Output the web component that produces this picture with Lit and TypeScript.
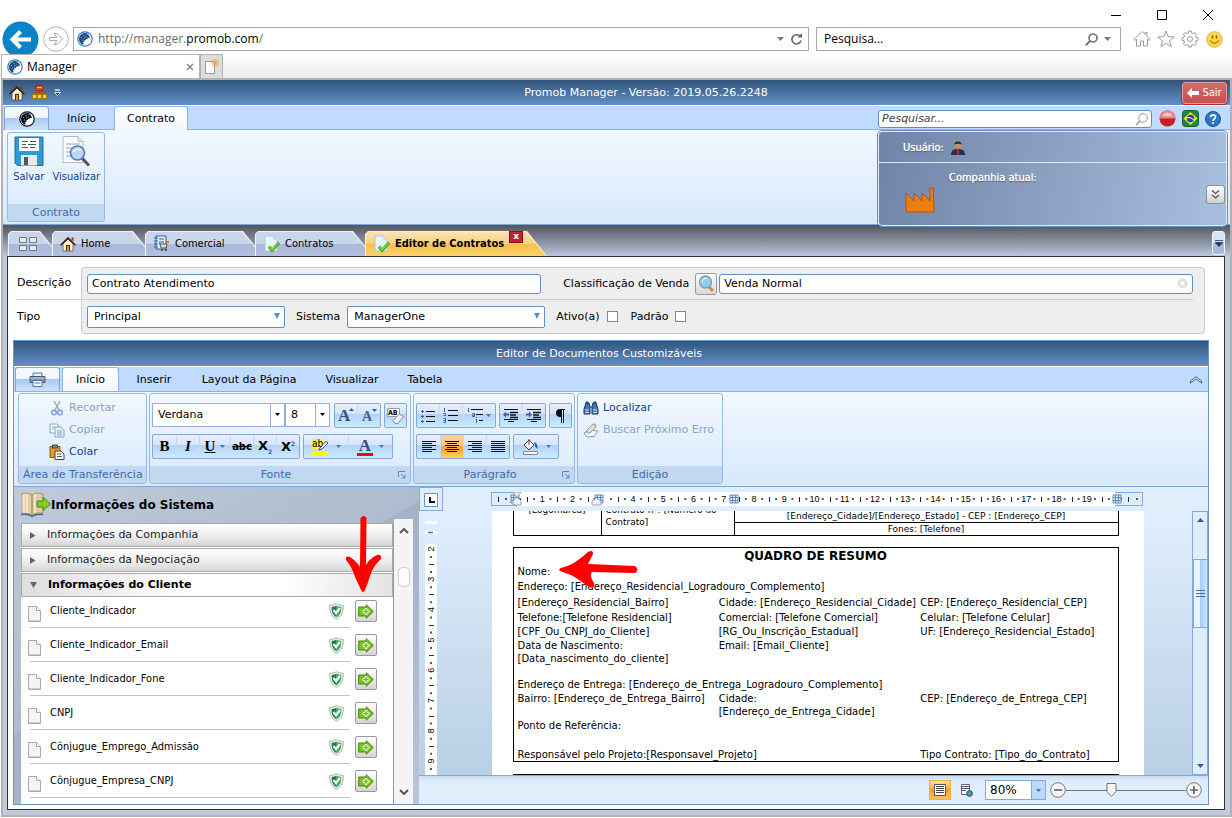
import { LitElement, html, css, svg } from "lit";
import { customElement, state } from "lit/decorators.js";
import { classMap } from "lit/directives/class-map.js";

const globe = (size: number, dark: string, ring: string) => html`<svg width=${size} height=${size} viewBox="0 0 16 16" aria-hidden="true">
  <circle cx="8" cy="8" r="7.200" fill="#fff" stroke=${ring} stroke-width="1.200"/>
  <path fill=${dark} d="M8.500 2C5 1.800 2.200 4.400 2 7.600c-.1 2.900 1.300 5.100 3.600 6.200.6.200 1-.2.900-.8L6.200 11l1.300-.6-.2-1.400 1.500.3.200-1.500 1.400.4.400-1.500 1.700.6.500-1.600-1-.4C12 3.600 10.500 2.100 8.500 2z"/>
  <path d="M4 6.500h1M6.500 4.500h1M5 9h1M8.500 6h1M9.500 3.500h1M7 7h1" stroke="#fff" stroke-width=".8" opacity=".7"/>
</svg>`;

const house = (size: number) => html`<svg width=${size} height=${size} viewBox="0 0 16 16" aria-hidden="true">
  <path d="M11.500 1.500h2v4l-2-2z" fill="#8a3a12"/>
  <path d="M3 8v7h10V8L8 3z" fill="#f8f1dc" stroke="#4a2a14" stroke-width=".6"/>
  <path d="M0 8.800L8 .8l8 8-1.200 1L8 3.400 1.200 9.800z" fill="#4a2410"/>
  <path d="M6 9h4v6H6z" fill="#5a2a10"/><path d="M7 10h2v5H7z" fill="#c9a22a"/>
</svg>`;

const docCheck = html`<svg width="17" height="17" viewBox="0 0 17 17" aria-hidden="true">
  <path d="M2 1h8l4 4v11H2z" fill="#e6f4fd" stroke="#9cc4dc" stroke-width=".8"/><path d="M10 1v4h4z" fill="#bfe0f3"/>
  <path d="M6 11.500l3 4 7-8" fill="none" stroke="#3f9e1d" stroke-width="3"/><path d="M6.200 11.700l2.800 3.200 6.500-7.300" fill="none" stroke="#8ddc4c" stroke-width="1.300"/>
</svg>`;

const lines = (rows: number[][]) => svg`${rows.map(([x, w], i) => svg`<rect x=${x} y=${1 + i * 2} width=${w} height="1"/>`)}`;
const align = (rows: number[][]) => html`<svg width="16" height="14" viewBox="0 0 16 14" fill="#111" aria-hidden="true">${lines(rows)}</svg>`;
const L = 14, S = 10;
const alignLeft = align([[1, L], [1, S], [1, L], [1, S], [1, L], [1, S]]);
const alignCenter = align([[1, L], [3, S], [1, L], [3, S], [1, L], [3, S]]);
const alignRight = align([[1, L], [5, S], [1, L], [5, S], [1, L], [5, S]]);
const alignFull = align([[1, L], [1, L], [1, L], [1, L], [1, L], [1, L]]);

const bullets = html`<svg width="16" height="14" viewBox="0 0 16 14" aria-hidden="true">
  <path d="M1 2.500h3M2.500 1v3M1 7.500h3M2.500 6v3M1 12.500h3M2.500 11v3" stroke="#2f62b0"/><path d="M6 2.500h9M6 7.500h9M6 12.500h9" stroke="#111"/></svg>`;
const numbers = html`<svg width="16" height="15" viewBox="0 0 16 15" aria-hidden="true">
  <path d="M1.500 0v4M.5 5.500h2v2h-2M.5 10.500h2v4h-2M.5 12.500h2" stroke="#2f62b0" fill="none"/><path d="M5 2.500h10M5 7.500h10M5 12.500h10" stroke="#111"/></svg>`;
const multi = html`<svg width="18" height="15" viewBox="0 0 18 15" aria-hidden="true">
  <path d="M1.500 0v4M5.500 5.500h2v3h-2v-1.500h2M9.500 11v4M9.500 9v1" stroke="#2f62b0" fill="none"/><path d="M4 1.500h12M9 6.500h7M12 12.500h4" stroke="#111"/></svg>`;
const indent = (out: boolean) => html`<svg width="18" height="15" viewBox="0 0 18 15" aria-hidden="true">
  <path d="M2 1.500h14M2 11.500h14M6 13.500h6" stroke="#111"/><path d="M8 4.500h8M8 7h6M8 9.500h8" stroke="#111" stroke-width="1.500"/>
  <path d=${out ? "M1 6.500l3-3v2h3v2H4v2z" : "M7 6.500l-3-3v2H1v2h3v2z"} fill="#2f62b0"/></svg>`;
const caret = html`<svg width="5" height="3" viewBox="0 0 5 3" aria-hidden="true"><path d="M0 0h5L2.500 3z" fill="#4a78b0"/></svg>`;
const launcher = html`<svg width="8" height="8" viewBox="0 0 8 8" aria-hidden="true"><path d="M.5 6V.500H7M3 3l4 4M7 3.500V7H3.500" fill="none" stroke="#5f86b8"/></svg>`;

const shield = html`<svg width="15" height="17" viewBox="0 0 15 17" aria-hidden="true">
  <path d="M7.500.6c2 1.300 4.500 1.700 6.700 1.700.6 6-1.600 11.300-6.700 14C2.400 13.600.2 8.300.8 2.300c2.200 0 4.700-.4 6.700-1.700z" fill="#f2f5f3" stroke="#9aa59e" stroke-width=".9"/>
  <path d="M7.500 2.500c1.600 1 3.300 1.400 4.900 1.400.3 4.700-1.200 8.200-4.900 10.500z" fill="#35a85a"/>
  <path d="M7.500 2.500v11.900C3.800 12.100 2.300 8.600 2.600 3.900c1.600 0 3.300-.4 4.900-1.400z" fill="#1c7f42"/>
  <path d="M4.500 7l2.500 3.200 4-5.200" fill="none" stroke="#fff" stroke-width="2.200"/></svg>`;
const insertArrow = html`<svg width="16" height="15" viewBox="0 0 16 15" aria-hidden="true">
  <path d="M.7 3h7.600V.8L15.300 7.500l-7 6.700V12H.7z" fill="#7cc51d" stroke="#3f8a0c"/>
  <path d="M7 4.500h2v2h2v2H9v2H7v-2H5v-2h2z" fill="#6ab51a" stroke="#f4ffe6" stroke-width=".9"/></svg>`;
const page = html`<svg width="13" height="16" viewBox="0 0 13 16" aria-hidden="true">
  <path d="M.5.5h8l4 4v11H.5z" fill="#f4f4f4" stroke="#aaa"/><path d="M8.500.5v4h4" fill="#fff" stroke="#aaa"/><path d="M1 14.500h11" stroke="#ccc"/></svg>`;

const FIELDS = ["Cliente_Indicador", "Cliente_Indicador_Email", "Cliente_Indicador_Fone", "CNPJ", "Cônjugue_Emprego_Admissão", "Cônjugue_Empresa_CNPJ"];

@customElement("app-root")
class AppRoot extends LitElement {
  @state() private zoom = 37;

  static styles = css`
    :host { display: flex; flex-direction: column; height: 100vh; overflow: hidden; background: #fff; color: #000;
      font: 11px/14px "DejaVu Sans", sans-serif; }
    * { box-sizing: border-box; }
    svg { display: block; flex: none; }
    button { font: inherit; color: inherit; background: none; border: 0; padding: 0; margin: 0; display: flex; align-items: center; justify-content: center; }
    input, select { font: inherit; color: inherit; margin: 0; outline: 0; }
    .narrow { font-family: "DejaVu Sans Condensed", "DejaVu Sans", sans-serif; }

    .window { display: flex; justify-content: flex-end; height: 27px; padding: 3px 1px 0 0; }
    .window button { width: 46px; height: 24px; }
    .nav { display: flex; height: 27px; padding-left: 2px; align-items: flex-start; font: 12px/22px "Open Sans", sans-serif; }
    .back { width: 37px; height: 24px; }
    .forward { width: 26px; height: 24px; margin: 0 4px 0 4px; }
    .address { display: flex; align-items: center; flex: 1; height: 24px; border: 1px solid #a8a8a8; padding: 0 5px 0 3px; gap: 5px; color: #6d6d6d; }
    .address b { font-weight: 400; color: #000; }
    .address span { flex: 1; }
    .address .tools { display: flex; align-items: center; gap: 6px; flex: none; }
    .find { display: flex; align-items: center; width: 305px; height: 24px; margin-left: 7px; border: 1px solid #a8a8a8; padding: 0 9px 0 7px; gap: 6px; }
    .find input { flex: 1; min-width: 0; border: 0; padding: 0; height: 20px; }
    .find input::placeholder { color: #000; }
    .chrome-icons { display: flex; align-items: center; gap: 6px; width: 111px; height: 24px; padding-left: 12px; }
    .chrome-icons button { width: 18px; height: 18px; }
    .tabs { display: flex; height: 24px; background: linear-gradient(#fff, #ececec); position: relative; padding-left: 1px; font: 12px/22px "Open Sans", sans-serif; }
    .tab { display: flex; align-items: center; gap: 4px; width: 199px; background: #fff; border: 1px solid #b4b4b4; border-bottom: 0; padding: 0 5px 0 5px; }
    .tab span { flex: 1; }
    .newtab { width: 23px; background: #dcdcdc; border: 1px solid #b0b0b0; border-bottom: 0; }

    .app { flex: 1; min-height: 0; display: flex; flex-direction: column; margin: 0 0 1px 1px; border: 2px solid #b2b2b2; background: #c0cbde; }
    .title { display: flex; align-items: center; height: 26px; background: linear-gradient(#31547b, #6390c6); border-bottom: 1px solid #fff; color: #fff; flex: none; }
    .title .quick { display: flex; align-items: center; gap: 7px; width: 107px; padding-left: 6px; }
    .title h1 { flex: 1; margin: 0; font-size: 11px; font-weight: 400; text-align: center; }
    .exit { height: 22px; width: 45px; gap: 3px; margin-right: 3px; border: 1px solid #e6a0a0; outline: 1px solid #b82a2a; border-radius: 3px; background: linear-gradient(#d46c6c, #c94f4f); color: #fff; font-size: 11px; }
    .ribbon-tabs { display: flex; height: 24px; padding-left: 1px; background: #bfdbff; border-bottom: 1px solid #8db2e3; flex: none; }
    .ribbon-tabs button { height: 24px; border: 1px solid transparent; border-bottom: 0; }
    .ribbon-tabs .menu { border-color: #7fa6d8; border-radius: 3px 3px 0 0; background: linear-gradient(#f3f8ff 45%, #a9caf4 50%, #cfe2fb); }
    .ribbon-tabs .on { border-color: #8db2e3; border-radius: 3px 3px 0 0; background: linear-gradient(#fff, #f2f8ff); }
    .w24 { width: 24px; } .w45 { width: 45px; } .w65 { width: 65px; } .w74 { width: 74px; } .w57 { width: 57px; } .w70 { width: 70px; } .w120 { width: 120px; } .w86 { width: 86px; } .w60 { width: 60px; }
    .space { flex: 1; }
    .search { display: flex; align-items: center; width: 274px; height: 18px; margin-top: 4px; border: 1px solid #5f8fc0; border-radius: 3px; background: #fff; padding: 0 3px; }
    .search input { flex: 1; min-width: 0; border: 0; padding: 0; font-style: italic; background: none; }
    .search input::placeholder { color: #444; }
    .badges { display: flex; align-items: center; gap: 6px; padding: 2px 9px 0 7px; }
    .ribbon { display: flex; gap: 3px; height: 95px; padding: 2px 4px; background: linear-gradient(#f2f8ff, #d7e9fc); border-bottom: 1px solid #7fa6d8; flex: none; }
    .group { display: flex; flex-direction: column; border: 1px solid #94b9e6; border-radius: 3px; overflow: hidden; color: #15428b; }
    .group .body { flex: 1; }
    .group footer { display: flex; align-items: center; height: 17px; background: #c1d8f1; color: #3e6aaa; padding: 0 4px; }
    .group footer span { flex: 1; text-align: center; white-space: nowrap; }
    .main-group { width: 98px; height: 90px; }
    .main-group .body { display: flex; padding: 3px 0 0 1px; }
    .big { flex-direction: column; justify-content: flex-start; gap: 2px; width: 40px; height: 50px; white-space: nowrap; }
    .big.wide { width: 56px; }
    .big svg { margin-bottom: 1px; }
    .user { width: 349px; height: 95px; margin: -1px -1px 0 0; border: 1px solid #dfeaf8; outline: 1px solid #6a90c0; border-radius: 4px; background: linear-gradient(100deg, #6f84a6, #a9bfdf); color: #fff; position: relative; text-shadow: 0 0 1px #fff, 0 1px 1px #445; }
    .user .who { display: flex; align-items: center; gap: 6px; height: 31px; padding: 2px 0 0 24px; border-bottom: 1px solid #dfe8f4; }
    .user .company { display: flex; align-items: flex-start; padding: 8px 1px 0 26px; height: 62px; }
    .user .company svg.factory { margin: 16px 14px 0 0; }
    .user .company span { flex: 1; }
    .more { width: 19px; height: 19px; margin-top: 14px; border: 1px solid #8a8f98; border-radius: 3px; background: linear-gradient(#fff, #d0d0d0); }

    .docs { display: flex; align-items: flex-end; height: 31px; background: linear-gradient(#52555c, #b9c6de); padding: 0 5px 0 5px; flex: none; }
    .doc { position: relative; display: flex; align-items: center; justify-content: flex-start; gap: 5px; height: 25px; padding-left: 8px; margin-right: -8px; background: #eef3fc; clip-path: polygon(0 3px, 3px 0, calc(100% - 20px) 0, 100% 100%, 0 100%); isolation: isolate; }
    .doc::before { content: ""; position: absolute; inset: 1px 1px 0 1px; z-index: -1; background: linear-gradient(#cbd5ea 50%, #a9b9da 52%, #b2c0df); clip-path: polygon(0 2px, 2px 0, calc(100% - 20px) 0, 100% 100%, 0 100%); }
    .doc.active { font-weight: 700; background: #fff0c8; }
    .doc.active::before { background: linear-gradient(#fbe3b4, #f8cf7b 50%, #f5c04e 52%, #fad269); }
    .d1 { width: 52px; padding-left: 11px; } .d2 { width: 101px; } .d3 { width: 118px; } .d4 { width: 118px; } .d5 { width: 182px; }
    .close { display: block; width: 14px; height: 12px; align-self: flex-start; background: #c4202c; border: 1px solid #8d0e18; color: #fff; font: 700 9px/9px "DejaVu Sans", sans-serif; }
    .tablist { width: 13px; height: 24px; margin-bottom: 1px; border: 1px solid #eef3fc; border-radius: 3px; background: linear-gradient(#d9e2f3 50%, #a9b9da 52%); }

    .content { flex: 1; min-height: 0; display: flex; flex-direction: column; margin: 0 5px 5px 4px; border: 1px solid #333; background: #fff; padding: 10px 15px 4px 5px; }
    .form { display: grid; grid-template-columns: 64px 1fr; margin: 0 4px 6px 4px; flex: none; }
    .form .label { display: flex; align-items: center; height: 33px; }
    .form .line { border-bottom: 1px solid #ccc; }
    .fields { background: #eee; border: 1px solid #ccc; border-width: 1px 1px 0 1px; border-radius: 4px 4px 0 0; padding-right: 11px; }
    .fields .in { display: flex; align-items: center; height: 32px; padding-left: 5px; border-bottom: 1px solid #ccc; }
    .fields.bottom { border-width: 0 1px 1px 1px; border-radius: 0 0 4px 4px; }
    .fields.bottom .in { border-bottom: 0; height: 33px; }
    .fields label { white-space: nowrap; }
    .text { height: 20px; border: 1px solid #5f8fc0; border-radius: 3px; background: #fff; padding: 0 4px; min-width: 0; }
    .t1 { flex: 455 1 0; margin-right: 22px; }
    .lookup { width: 22px; height: 22px; margin: 0 2px 0 6px; border: 1px solid #999; border-radius: 3px; background: linear-gradient(#fff, #d8d8d8); }
    .t2 { flex: 475 1 0; display: flex; align-items: center; }
    .t2 input { flex: 1; min-width: 0; border: 0; padding: 0; background: none; }
    .drop { width: 198px; height: 22px; appearance: none; border: 1px solid #5f8fc0; border-radius: 2px; padding: 0 6px; margin-right: 11px;
      background: #fff url("data:image/svg+xml,%3Csvg xmlns='http://www.w3.org/2000/svg' width='6' height='7'%3E%3Cpath d='M0 0h6L3 6z' fill='%235f8fc0'/%3E%3C/svg%3E") no-repeat right 4px center; }
    .drop.second { margin-left: 7px; }
    .check { appearance: none; width: 11px; height: 11px; border: 1px solid #5f8fc0; background: #fff; margin: 0 13px 0 7px; }

    .editor { flex: 1; min-height: 0; display: flex; flex-direction: column; border: 1px solid #6a93c8; }
    .editor h2 { margin: 0; height: 26px; padding-right: 24px; font-size: 11px; line-height: 26px; font-weight: 400; text-align: center; color: #fff; background: linear-gradient(#31547b, #6390c6); border-bottom: 1px solid #fff; flex: none; }
    .editor .ribbon { gap: 2px; padding: 1px 4px 2px; }
    .editor .ribbon-tabs { height: 25px; }
    .editor .menu { margin-right: 2px; }
    .g1 { width: 129px; } .g2 { width: 262px; } .g3 { width: 162px; } .g4 { width: 146px; }
    .cmd { display: flex; justify-content: flex-start; gap: 4px; height: 22px; white-space: nowrap; }
    .off { color: #8da3c6; } .off svg { opacity: .6; }
    .g1 .body { padding: 3px 0 0 30px; } .g4 .body { padding: 3px 0 0 5px; }
    .g2 .body, .g3 .body { display: flex; flex-direction: column; gap: 6px; padding: 9px 2px 0; color: #000; }
    .tools-row { display: flex; gap: 3px; height: 25px; }
    .combo { appearance: none; flex: none; height: 24px; border: 1px solid #94b0d8; background: #fff url("data:image/svg+xml,%3Csvg xmlns='http://www.w3.org/2000/svg' width='14' height='24'%3E%3Cpath d='M.5 0v24' stroke='%2394b0d8'/%3E%3Cpath d='M5 10h5l-2.500 3z'/%3E%3C/svg%3E") no-repeat right center; padding: 0 5px; }
    .c1 { width: 133px; } .c2 { width: 45px; margin: 0 1px 0 -3px; }
    .bar { display: flex; flex: none; height: 25px; border: 1px solid #86a9d8; border-radius: 2px; background: linear-gradient(#e6f0fd, #d5e5fa 42%, #b4d2f7 46%, #ccecff); }
    .bar button { min-width: 0; flex: 1 1 23px; gap: 6px; }
    .bar button + button { border-left: 1px solid #c5daf5; }
    .bar .hot { background: linear-gradient(#fbd39a, #fcc27a 48%, #fb9c2c 52%, #fdd35f); }
    .b2 { width: 47px; } .b1 { width: 23px; } .b6 { width: 148px; } .bh { width: 90px; } .bl { width: 80px; } .ba { width: 94px; } .bp { width: 46px; }
    .b6 button.split { flex: 1 1 31px; gap: 5px; }
    .bl button:last-child { flex: 1 1 34px; gap: 1px; }
    .glyph { font: 700 15px/17px "Liberation Serif", serif; color: #000; }
    .blue { color: #2e4f86; }
    .serif-u { text-decoration: underline; }
    .strike { font: 700 11px/14px "DejaVu Sans Condensed", sans-serif; text-decoration: line-through; }
    .xs { font: 700 13px/16px "DejaVu Sans", sans-serif; }
    .xs sub, .xs sup { font-size: 6px; color: #2e62b0; line-height: 6px; }
    .ink { font-size: 17px; border-bottom: 3px solid red; line-height: 15px; padding: 0 2px; }

    .work { flex: 1; min-height: 0; display: flex; }
    .side { position: relative; display: flex; flex-direction: column; width: 405px; background: linear-gradient(150deg, #c0cbda 0, #b3c0d1 30%, #aebccf 45%, #a5b2c5 45.1%, #a8b5c8 60%, #b9c5d6 100%); padding: 0 6px 0 7px; flex: none; }
    .side header { display: flex; align-items: center; height: 32px; padding-top: 3px; font-size: 12px; font-weight: 700; }
    .side .scroller { flex: 1; min-height: 0; display: flex; }
    .side .list { flex: 1; min-width: 0; margin-top: 4px; background: #fff; overflow: hidden; border-right: 1px solid #8f98a6; }
    .side .fold { display: flex; justify-content: flex-start; width: 372px; height: 24px; margin-bottom: 1px; padding-left: 8px; gap: 11px; border: 1px solid #aaa; background: linear-gradient(#fff, #f0f0f0 50%, #d6d6d6); color: #222; }
    .side .fold.open { font-weight: 700; color: #000; background: linear-gradient(100deg, #ddd, #fff 45%, #fff 70%, #e2e2e2); }
    .entries { list-style: none; margin: -4px 0 0; padding: 0; }
    .entries li { display: flex; align-items: center; height: 34px; padding: 1px 0 1px 7px; }
    .entries .entry { display: flex; align-items: center; flex: none; width: 322px; height: 34px; gap: 9px; position: relative; }
    .entries .entry::after { content: ""; position: absolute; left: 2px; right: 0; bottom: 0; border-bottom: 1px solid #c4c4c4; }
    .entry .name { flex: 1; }
    .entry .ok { margin-right: 6px; }
    .entry .pg { margin-top: 6px; }
    .ins { width: 22px; height: 22px; margin-left: 5px; border: 1px solid #999; border-radius: 2px; background: linear-gradient(#fff, #d4d4d4); }
    .scroll { display: flex; flex-direction: column; align-items: center; width: 19px; background: #f4f4f4; padding: 9px 0; }
    .scroll i { width: 12px; height: 20px; margin-top: 33px; border: 1px solid #ccc; border-radius: 5px; background: #fdfdfd; }
    .scroll i + * { margin-top: auto; }
    .mark { position: absolute; pointer-events: none; }
    .m1 { left: 330px; top: 28px; } .m2 { left: 140px; top: 63px; }

    .paper { position: relative; flex: 1; min-width: 0; display: flex; flex-direction: column; background: #e0eefc; }
    .top-rule { display: flex; height: 24px; flex: none; }
    .corner { width: 24px; border: 1px solid #86a9d8; background: #e0eefc; }
    .rule-wrap { flex: 1; display: flex; justify-content: center; align-items: center; padding-right: 17px; }
    .stage { flex: 1; min-height: 0; display: flex; background: linear-gradient(#e0effd, #b9cfe4); }
    .side-rule { width: 24px; overflow: hidden; }
    .view { flex: 1; min-width: 0; overflow: hidden; }
    .sheet { width: 652px; height: 420px; margin: -36px auto 0; background: #fff; padding: 0 25px 0 21px; font-size: 10px; line-height: 13px; white-space: nowrap; }
    .sheet table { width: 606px; table-layout: fixed; border-collapse: collapse; border: 1px solid #000; }
    .sheet td, .sheet th { padding: 0 4px; vertical-align: middle; font-weight: 400; text-align: left; overflow: visible; }
    .sheet th { font-weight: 700; font-size: 12px; text-align: center; }
    .headtab { font-size: 9px; }
    .headtab td { border: 1px solid #000; text-align: center; line-height: 12px; vertical-align: bottom; }
    .headtab .l { text-align: left; padding-bottom: 7px; }
    .headtab .logo { padding-bottom: 19px; }
    .resume { margin-top: 11px; }
    .resume .h13 td { height: 13px; } .resume .h14 td { height: 14px; } .resume .h15 td { height: 15px; } .resume .h16 td { height: 16px; } .resume .h17 th { height: 17px; }
    .resume .tall td { vertical-align: top; height: 26px; }
    .sheet .next { margin-top: 12px; height: 40px; border-top-width: 2px; }
    .vscroll { display: flex; flex-direction: column; align-items: center; width: 16px; border: 1px solid #86a9d8; background: #e0eefc; padding: 6px 0; }
    .vscroll .thumb { display: flex; align-items: center; justify-content: center; width: 15px; height: 69px; margin-top: 37px; border: 1px solid #86a9d8; background: linear-gradient(90deg, #eaf4ff 45%, #a9cdf8 50%, #cfe6ff); }
    .vscroll .thumb + * { margin-top: auto; }
    .status { display: flex; align-items: center; justify-content: flex-end; height: 29px; border-top: 1px solid #86a9d8; background: linear-gradient(#cbdff4, #e0eefc 6px); padding-right: 6px; flex: none; }
    .status .v { width: 22px; height: 20px; }
    .status .sel { border: 1px solid #f0b43a; background: linear-gradient(#fce0a8, #fb9c2c 55%, #fdc55f); }
    .status .web { margin: 0 7px 0 3px; width: 24px; }
    .status .pct { width: 61px; height: 20px; font-size: 12px; appearance: none; border: 1px solid #86a9d8; border-radius: 0; padding: 0 4px;
      background: #fff url("data:image/svg+xml,%3Csvg xmlns='http://www.w3.org/2000/svg' width='14' height='18'%3E%3Cpath d='M0 0h14v18H0z' fill='%23bcd8fa'/%3E%3Cpath d='M.5 0v18' stroke='%2386a9d8'/%3E%3Cpath d='M5 8h5l-2.500 3z' fill='%23456fa8'/%3E%3C/svg%3E") no-repeat right center; margin-right: 4px; }
    .range { appearance: none; width: 120px; height: 18px; background: linear-gradient(#777, #777) center / 100% 1px no-repeat; }
    .range::-webkit-slider-thumb { appearance: none; width: 11px; height: 14px; background: url("data:image/svg+xml,%3Csvg xmlns='http://www.w3.org/2000/svg' width='11' height='14'%3E%3Cpath d='M1 .5h9v8l-4.500 5L1 8.500z' fill='%23f4f4f4' stroke='%23777'/%3E%3C/svg%3E"); }
  `;

  private browser() {
    return html`
      <div class="window">
        <button aria-label="Minimizar"><svg width="10" height="10"><path d="M0 5.500h10" stroke="#000"/></svg></button>
        <button aria-label="Maximizar"><svg width="10" height="10"><path d="M.5.5h9v9h-9z" fill="none" stroke="#000"/></svg></button>
        <button aria-label="Fechar"><svg width="10" height="10"><path d="M0 0l10 10M10 0L0 10" stroke="#000"/></svg></button>
      </div>
      <div class="nav">
        <button class="back" aria-label="Voltar"><svg width="37" height="37" viewBox="0 0 37 37"><circle cx="18.500" cy="18.500" r="18" fill="#0a84c6"/><path d="M10 18.500h19M18.500 10.500l-8 8 8 8" fill="none" stroke="#fff" stroke-width="4"/></svg></button>
        <button class="forward" aria-label="Avançar"><svg width="26" height="26" viewBox="0 0 26 26"><circle cx="13" cy="13" r="12.300" fill="#fff" stroke="#b0b0b0"/><path d="M6.500 11.500h7.500l-3-4h3l5.500 5.500-5.500 5.500h-3l3-4H6.500z" fill="#fff" stroke="#aaa"/></svg></button>
        <div class="address">${globe(16, "#1d4f86", "#3a7cb4")}<span>http://manager.<b>promob.com</b>/</span>
          <div class="tools"><svg width="7" height="4"><path d="M0 0h7L3.500 4z" fill="#777"/></svg>
          <svg width="13" height="13" viewBox="0 0 13 13"><path d="M10.500 4A4.600 4.600 0 1 0 11 7.500" fill="none" stroke="#666" stroke-width="1.600"/><path d="M7.500 4.500H12V0z" fill="#666"/></svg></div>
        </div>
        <div class="find"><input aria-label="Pesquisa" placeholder="Pesquisa..."/>
          <svg width="13" height="13" viewBox="0 0 13 13"><circle cx="8" cy="5" r="4" fill="none" stroke="#777" stroke-width="1.700"/><path d="M5 8L.8 12.200" stroke="#777" stroke-width="2"/></svg>
          <svg width="7" height="4"><path d="M0 0h7L3.500 4z" fill="#777"/></svg></div>
        <div class="chrome-icons">
          <button aria-label="Página inicial"><svg width="18" height="18" viewBox="0 0 18 18"><path d="M1 9.500L9 1.500l3 3v-2h2v4l3 3-1 1-1.500-1.500v7h-4v-5h-3v5h-4v-7L2 10.500z" fill="#fff" stroke="#999"/></svg></button>
          <button aria-label="Favoritos"><svg width="18" height="18" viewBox="0 0 18 18"><path d="M9 1l2.200 5.700 6 .3-4.700 3.800 1.600 5.900L9 13.400l-5.100 3.300 1.600-5.900L.8 7l6-.3z" fill="#fff" stroke="#999"/></svg></button>
          <button aria-label="Ferramentas"><svg width="18" height="18" viewBox="0 0 18 18"><path d="M7.700 1h2.600l.4 2 1.300.6L13.800 2.400l1.900 1.900L14.500 6l.6 1.400 2 .4v2.500l-2 .4-.6 1.400 1.200 1.700-1.900 1.800-1.700-1.100-1.400.5-.4 2H7.700l-.4-2-1.400-.5-1.700 1.100-1.800-1.800 1.100-1.700-.5-1.400-2-.4V7.800l2-.4L3.500 6 2.400 4.300l1.800-1.900L5.900 3.600 7.300 3z" fill="#fff" stroke="#999"/><circle cx="9" cy="9" r="2.500" fill="#fff" stroke="#999"/></svg></button>
          <button aria-label="Comentários"><svg width="17" height="17" viewBox="0 0 17 17"><circle cx="8.500" cy="8.500" r="7.800" fill="#fcd73f" stroke="#d8b860"/><path d="M6.500 4.500v3M10.500 4.500v3" stroke="#7a5a10" stroke-width="1.500"/><path d="M4 9.500q4.500 5.500 9 0" fill="none" stroke="#7a5a10"/></svg></button>
        </div>
      </div>
      <div class="tabs">
        <div class="tab">${globe(16, "#1d4f86", "#3a7cb4")}<span>Manager</span><button aria-label="Fechar guia"><svg width="8" height="8"><path d="M1 1l6 6M7 1L1 7" stroke="#8a8a8a" stroke-width="1.600"/></svg></button></div>
        <button class="newtab" aria-label="Nova guia"><svg width="15" height="16" viewBox="0 0 15 16"><path d="M1.500 2.500h9v12h-9z" fill="#fff" stroke="#999"/><path d="M11 0v8M7 4h8M8 1l6 6M14 1L8 7" stroke="#f0a020"/></svg></button>
      </div>`;
  }

  private mainRibbon() {
    return html`
      <div class="title">
        <div class="quick">${house(16)}<svg width="15" height="15" viewBox="0 0 15 15"><path d="M4 .5h7v5H4z" fill="#d9531e" stroke="#8a2e0e"/><path d="M7.500 6v2M1.500 10V7.500h12V10" fill="none" stroke="#b34a14"/><path d="M5 2.500h5" stroke="#f5b080"/><path d="M.5 9.500h4v4h-4zM5.500 9.500h4v4h-4zM10.500 9.500h4v4h-4z" fill="#f5d04a" stroke="#a17a10"/></svg>
          <svg width="7" height="8" viewBox="0 0 7 8"><path d="M1 1h5" stroke="#fff" stroke-width="1.200"/><path d="M.5 3.500h6l-3 3z" fill="#1d3557" stroke="#fff" stroke-width=".8"/></svg></div>
        <h1>Promob Manager - Versão: 2019.05.26.2248</h1>
        <button class="exit narrow"><svg width="12" height="10" viewBox="0 0 12 10"><path d="M0 5l5-5v3h7v4H5v3z" fill="#fff"/></svg>Sair</button>
      </div>
      <div class="ribbon-tabs">
        <button class="menu w45" aria-label="Menu">${globe(16, "#0d1218", "#0d1218")}</button>
        <button class="w65">Início</button><button class="on w74">Contrato</button><span class="space"></span>
        <div class="search"><input aria-label="Pesquisar" placeholder="Pesquisar..."/><svg width="13" height="13" viewBox="0 0 13 13"><circle cx="8" cy="5" r="4.300" fill="none" stroke="#999"/><path d="M5 8L1 12" stroke="#999" stroke-width="1.500"/></svg></div>
        <div class="badges">
          <svg width="17" height="17" viewBox="0 0 17 17"><circle cx="8.500" cy="8.500" r="8" fill="#c81e24"/><path d="M.5 8.500a8 8 0 0 1 16 0z" fill="#e5868c"/><path d="M3 5.500q5.500-6 11 0-5.500 2-11 0z" fill="#f4c4c8"/></svg>
          <svg width="17" height="17" viewBox="0 0 17 17"><rect x=".5" y=".5" width="16" height="16" rx="3" fill="#1f8a3c" stroke="#126028"/><path d="M8.500 2l7 6.500-7 6.500-7-6.500z" fill="#f5e23c"/><circle cx="8.500" cy="8.500" r="3.700" fill="#27459c"/><path d="M5 7.500q4-.5 7 2.500" fill="none" stroke="#fff"/></svg>
          <svg width="16" height="16" viewBox="0 0 16 16"><circle cx="8" cy="8" r="7.500" fill="#2f74c6" stroke="#1b4f96"/><path d="M5.500 6.200C5.500 3 10.800 3.200 10.500 6 10.300 7.600 8.200 7.800 8 10M8 11.300v1.700" fill="none" stroke="#fff" stroke-width="1.700"/></svg>
        </div>
      </div>
      <div class="ribbon">
        <section class="group main-group"><div class="body narrow">
          <button class="big"><svg width="30" height="31" viewBox="0 0 30 31"><path d="M1 1h28v28.500H3.500L1 27z" fill="#2f9ad6" stroke="#1b6ea6"/><path d="M5 2h20v13H5z" fill="#fff"/><path d="M8 5.500h6m2 0h6M8 8.500h4m2 0h8M8 11.500h6m2 0h5" stroke="#555"/><path d="M7 19h16v10.500H7z" fill="#e8ebee"/><path d="M10 21h4v8h-4z" fill="#555"/></svg>Salvar</button>
          <button class="big wide"><svg width="30" height="31" viewBox="0 0 30 31"><path d="M2 .5h15l5 5v21H2z" fill="#fafbfc" stroke="#b5bac2"/><path d="M17 .5v5h5" fill="#e3e6ea" stroke="#b5bac2"/><path d="M5 8h14M5 12h6M5 16h5M5 20h6" stroke="#8aa3c0"/><path d="M21 22l7 7.500" stroke="#555" stroke-width="3"/><circle cx="16.500" cy="17" r="7" fill="#b9d7f4" stroke="#4f7db5" stroke-width="1.600"/><path d="M12 16q3-4 8-2" stroke="#fff" stroke-width="1.500" fill="none"/></svg>Visualizar</button>
        </div><footer><span>Contrato</span></footer></section>
        <span class="space"></span>
        <section class="user narrow">
          <div class="who">Usuário:<svg width="16" height="16" viewBox="0 0 16 16"><path d="M1 15c0-4 2-6 7-6s7 2 7 6z" fill="#2c3038"/><path d="M7 9h2l-.5 6h-1z" fill="#c33"/><circle cx="8" cy="5" r="3.600" fill="#c98f62"/><path d="M4.200 4.500C4.500.5 11.500.5 11.800 4.500 9 3.500 7 3.500 4.200 4.500z" fill="#3a2413"/></svg></div>
          <div class="company"><svg class="factory" width="30" height="26" viewBox="0 0 30 26"><path d="M1 25V6l8 8V6l8 8V6l8 8V1h3.500v14H29v10z" fill="#ee7d11" stroke="#b9500a"/></svg><span>Companhia atual:</span>
            <button class="more" aria-label="Expandir"><svg width="9" height="9" viewBox="0 0 9 9"><path d="M1 .5l3.500 3L8 .5M1 5l3.500 3L8 5" fill="none" stroke="#555" stroke-width="1.300"/></svg></button></div>
        </section>
      </div>`;
  }

  private form() {
    return html`
      <div class="form">
        <div class="label line"><label for="desc">Descrição</label></div>
        <div class="fields"><div class="in">
          <input id="desc" class="text t1" .value=${"Contrato Atendimento"}/>
          <label for="classe">Classificação de Venda</label>
          <button class="lookup" aria-label="Localizar classificação"><svg width="17" height="17" viewBox="0 0 17 17"><path d="M11 12l4 4" stroke="#c99335" stroke-width="3"/><circle cx="7.500" cy="7" r="6" fill="#8ed0f5" stroke="#8797a5" stroke-width="1.300"/><path d="M4 7q1-4 5-3.500" stroke="#fff" fill="none"/></svg></button>
          <div class="text t2"><input id="classe" .value=${"Venda Normal"}/><svg width="11" height="11" viewBox="0 0 11 11"><circle cx="5.500" cy="5.500" r="5" fill="#ddd"/><path d="M3.500 3.500l4 4M7.500 3.500l-4 4" stroke="#fff" stroke-width="1.600"/></svg></div>
        </div></div>
        <div class="label"><label for="tipo">Tipo</label></div>
        <div class="fields bottom"><div class="in">
          <select id="tipo" class="drop"><option>Principal</option></select>
          <label for="sis">Sistema</label><select id="sis" class="drop second"><option>ManagerOne</option></select>
          <label for="ativo">Ativo(a)</label><input id="ativo" class="check" type="checkbox"/>
          <label for="padrao">Padrão</label><input id="padrao" class="check" type="checkbox"/>
        </div></div>
      </div>`;
  }

  private editorRibbon() {
    return html`
      <div class="ribbon-tabs">
        <button class="menu w45" aria-label="Imprimir"><svg width="17" height="15" viewBox="0 0 17 15"><path d="M4 1h9v4H4z" fill="#eaf2ff" stroke="#4a76b5"/><path d="M1 4.500h15v6H1z" fill="#8b929c" stroke="#545a63"/><path d="M1.500 6h14" stroke="#c9ced6"/><path d="M4 8.500h9v6H4z" fill="#fff" stroke="#4a76b5"/><path d="M5.500 11h6" stroke="#4a76b5"/></svg></button>
        <button class="on w57">Início</button><button class="w70">Inserir</button><button class="w120">Layout da Página</button><button class="w86">Visualizar</button><button class="w60">Tabela</button>
        <span class="space"></span><button aria-label="Recolher" class="w24"><svg width="12" height="8" viewBox="0 0 12 8"><path d="M.5 5L6 .8 11.500 5v2L6 3 .5 7z" fill="#fff" stroke="#456"/></svg></button>
      </div>
      <div class="ribbon">
        <section class="group g1"><div class="body">
          <button class="cmd off" disabled><svg width="16" height="16" viewBox="0 0 16 16"><path d="M5 1l5 9M11 1L6 10" stroke="#777" stroke-width="1.500"/><circle cx="5" cy="12.500" r="2.300" fill="none" stroke="#36c" stroke-width="1.500"/><circle cx="11" cy="12.500" r="2.300" fill="none" stroke="#36c" stroke-width="1.500"/></svg>Recortar</button>
          <button class="cmd off" disabled><svg width="16" height="16" viewBox="0 0 16 16"><path d="M1 2h7l2 2v7H1z" fill="#fff" stroke="#47a"/><path d="M6 5h6l3 3v7H6z" fill="#e5eefc" stroke="#47a"/><path d="M8 9h5M8 11h5M8 13h5M3 5h3M3 7h2" stroke="#47a"/></svg>Copiar</button>
          <button class="cmd"><svg width="16" height="16" viewBox="0 0 16 16"><path d="M1 2.500h10v11H1z" fill="#e09a2b" stroke="#8a5a12"/><path d="M3.500 1h5v3h-5z" fill="#888" stroke="#444"/><path d="M6 7h6l3 3v5.500H6z" fill="#fff" stroke="#444"/><path d="M8 10h4M8 12.500h5" stroke="#555"/></svg>Colar</button>
        </div><footer><span>Área de Transferência</span></footer></section>

        <section class="group g2"><div class="body">
          <div class="tools-row">
            <select class="combo c1" aria-label="Fonte"><option>Verdana</option></select><select class="combo c2" aria-label="Tamanho"><option>8</option></select>
            <div class="bar b2"><button aria-label="Aumentar fonte"><svg width="18" height="17" viewBox="0 0 18 17"><text x="1" y="14" font-family="Liberation Serif" font-size="17" font-weight="700" fill="#2e4f86">A</text><path d="M12 4h5l-2.500-3z" fill="#2e62b0"/></svg></button>
            <button aria-label="Diminuir fonte"><svg width="18" height="17" viewBox="0 0 18 17"><text x="2" y="14" font-family="Liberation Serif" font-size="14" font-weight="700" fill="#4a5f86">A</text><path d="M12 2h5l-2.500 3z" fill="#2e62b0"/></svg></button></div>
            <div class="bar b1"><button aria-label="Limpar formatação"><svg width="19" height="18" viewBox="0 0 19 18"><path d="M1.500 1.500h12v8h-12z" fill="#fff" stroke="#99a"/><text x="2" y="8" font-family="DejaVu Sans Condensed" font-size="7" font-weight="700">AB</text><path d="M7 13.500l6.500-6.500 4 2.500-5.500 7H9z" fill="#eef1f6" stroke="#889"/></svg></button></div>
          </div>
          <div class="tools-row">
            <div class="bar b6"><button class="glyph">B</button><button class="glyph"><i>I</i></button><button class="glyph split"><span class="serif-u">U</span>${caret}</button><button class="strike">abc</button><button class="xs"><span>X<sub>2</sub></span></button><button class="xs"><span>X<sup>2</sup></span></button></div>
            <div class="bar bh"><button aria-label="Realce"><svg width="18" height="18" viewBox="0 0 18 18"><path d="M0 1h11v10H0z" fill="#ffe94a"/><text x="0" y="9" font-family="DejaVu Sans Condensed" font-size="10">ab</text><path d="M8 10l6-7 2 2-6 6-3 1z" fill="#eee" stroke="#556"/><path d="M0 14h16v3H0z" fill="#ff0"/></svg>${caret}</button>
            <button aria-label="Cor da fonte"><span class="glyph blue ink">A</span>${caret}</button></div>
          </div>
        </div><footer><span>Fonte</span>${launcher}</footer></section>

        <section class="group g3"><div class="body">
          <div class="tools-row">
            <div class="bar bl"><button aria-label="Marcadores">${bullets}</button><button aria-label="Numeração">${numbers}</button><button aria-label="Vários níveis">${multi}${caret}</button></div>
            <div class="bar b2"><button aria-label="Diminuir recuo">${indent(true)}</button><button aria-label="Aumentar recuo">${indent(false)}</button></div>
            <div class="bar b1"><button aria-label="Mostrar marcas"><svg width="11" height="16" viewBox="0 0 11 16"><path d="M10 1H5a4 4 0 0 0 0 8h1v6h1V2h1v13h1V2h1z" fill="#111"/></svg></button></div>
          </div>
          <div class="tools-row">
            <div class="bar ba"><button aria-label="Esquerda">${alignLeft}</button><button class="hot" aria-label="Centro">${alignCenter}</button><button aria-label="Direita">${alignRight}</button><button aria-label="Justificar">${alignFull}</button></div>
            <div class="bar bp"><button aria-label="Sombreamento"><svg width="18" height="17" viewBox="0 0 18 17"><path d="M7 2l5 5-5 5-5-5z" fill="#fff" stroke="#445"/><path d="M7 7V1" stroke="#445"/><path d="M12 4q4 1 3.500 7-2-1-2.500-3z" fill="#2f62b0"/><path d="M1.500 13.500h14v3h-14z" fill="#fff" stroke="#888"/></svg>${caret}</button></div>
          </div>
        </div><footer><span>Parágrafo</span>${launcher}</footer></section>

        <section class="group g4"><div class="body">
          <button class="cmd"><svg width="16" height="14" viewBox="0 0 16 14"><path d="M1 13V8l2-6h3l1 4v7zM15 13V8l-2-6h-3L9 6v7z" fill="#4a74b4" stroke="#1c3360"/><path d="M2 9h4M10 9h4M2 11.500h4M10 11.500h4" stroke="#d4e2f8"/><path d="M3 3V1h2v2M11 3V1h2v2M7 6h2" stroke="#1c3360" fill="none"/></svg>Localizar</button>
          <button class="cmd off" disabled><svg width="16" height="16" viewBox="0 0 16 16"><path d="M1 11l5-3 9 1-4 5.500-7 .5z" fill="#fff" stroke="#556"/><path d="M4 8l6-6 3 3-6 6H4z" fill="#dcd5c4" stroke="#665"/><path d="M10 2l1.500-1 2.500 2.500L13 5z" fill="#d65"/></svg>Buscar Próximo Erro</button>
        </div><footer><span>Edição</span></footer></section>
      </div>`;
  }

  private side() {
    const right = html`<svg width="6" height="7"><path d="M0 0l5.500 3.500L0 7z" fill="#666"/></svg>`;
    return html`
      <aside class="side">
        <header><svg width="30" height="26" viewBox="0 0 30 26"><path d="M0 2q7-2 11 1 4-3 11-1v19q-7-1-11 2-4-3-11-2z" fill="#e4cba8" stroke="#b39062"/><path d="M11 3v20" stroke="#a07c4c"/><path d="M3 2v19M6 2v19M14 2v19" stroke="#f4e4cc" stroke-width="2"/><path d="M0 22.500q7-1 11 2 4-3 11-2" fill="none" stroke="#2a6eb4" stroke-width="1.500"/><path d="M16 9h6V5l7.500 7-7.500 6.500V15h-6z" fill="#86cc24" stroke="#3f8a0c"/></svg>Informações do Sistema</header>
        <div class="scroller">
          <div class="list">
            <button class="fold">${right}Informações da Companhia</button>
            <button class="fold">${right}Informações da Negociação</button>
            <button class="fold open"><svg width="7" height="6"><path d="M0 0h7L3.500 6z" fill="#666"/></svg>Informações do Cliente</button>
            <ul class="entries narrow">${FIELDS.map(f => html`<li>
              <div class="entry"><span class="pg">${page}</span><span class="name">${f}</span><span class="ok">${shield}</span></div>
              <button class="ins" aria-label=${"Inserir " + f}>${insertArrow}</button></li>`)}</ul>
          </div>
          <div class="scroll"><svg width="10" height="6"><path d="M1 5l4-4 4 4" fill="none" stroke="#555" stroke-width="2"/></svg><i></i><svg width="10" height="6"><path d="M1 1l4 4 4-4" fill="none" stroke="#555" stroke-width="2"/></svg></div>
        </div>
        <svg class="mark m1" width="38" height="80" viewBox="0 0 38 80"><path d="M16.500 3q3.500-4 6 0l-.5 47q3-6 11-10 5-1 4 4-8 7-11 17-2 7-5 14-2 4-4 0-3-7-6-13Q8 52 2 45q-1-5 4-3 7 5 10 10z" fill="#f00"/></svg>
      </aside>`;
  }

  private hRuler() {
    const cm = 30.25, x0 = 22;
    const n = Array.from({ length: 19 }, (_, i) => i + 1);
    const grid = (x: number) => svg`<path d="M${x} 3h8v8h-8zM${x + 2.500} 3v8M${x + 5.500} 3v8M${x} 5.500h8M${x} 8.500h8" fill="#dbe8fa" stroke="#4a78b8" stroke-width=".8"/>`;
    return html`<svg width="652" height="14" viewBox="0 0 652 14" font-family="Liberation Sans" font-size="9" text-anchor="middle">
      <rect x=".5" y=".5" width="651" height="13" fill="#dfecfb" stroke="#86a9d8"/><rect x="26" y="0" width="598" height="14" fill="#fff"/>
      ${svg`<path d="M7.500 5v5M637.500 5v5" stroke="#222"/><path d="M14 7h2M629 7h2M645 7h2" stroke="#222" stroke-width="1.500"/>`}
      ${n.map(k => k === 3 ? "" : svg`<text x=${x0 + k * cm - 1} y="10">${k}</text>`)}
      ${n.concat(20).map(k => svg`<path d="M${Math.round(x0 + (k - .5) * cm) - .5} 5v5" stroke="#222"/><path d="M${x0 + (k - .27) * cm - 2} 7h2M${x0 + (k - .73) * cm - 2} 7h2" stroke="#222" stroke-width="1.500"/>`)}
      ${grid(20)}${grid(104)}${grid(239)}${grid(622)}
      <path d="M22 0h8l-4 5zM22 9l4-4 4 4v4h-8zM101 9l4.500-3 4.500 3v4h-9z" fill="#f2f2f2" stroke="#8a9bb5" stroke-width=".9"/>
    </svg>`;
  }

  private vRuler() {
    const n = [2, 3, 4, 5, 6, 7, 8, 9];
    return html`<svg width="24" height="265" viewBox="0 0 24 265" font-family="Liberation Sans" font-size="9" text-anchor="middle">
      <path d="M6 10h12v3H6zM6 20h12v3H6zM6 33h12v232H6z" fill="#fff"/><path d="M9 21.500h5" stroke="#667" stroke-width="1.500"/>
      ${n.map(k => { const y = 38 + (k - 2) * 30.3; return svg`<text transform="translate(15 ${y}) rotate(-90)">${k}</text>
        <path d="M10 ${Math.round(y + 15) + .5}h5" stroke="#333"/><path d="M12 ${y + 7}v2M12 ${y + 22}v2" stroke="#222" stroke-width="1.500"/>`; })}
    </svg>`;
  }

  private paper() {
    return html`
      <section class="paper">
        <div class="top-rule">
          <div class="corner"><svg width="22" height="22" viewBox="0 0 22 22"><path d="M4.500 5.500h13v13h-13z" fill="#fff" stroke="#6a93c8"/><path d="M9 9h2v4h4v2H9z" fill="#111"/></svg></div>
          <div class="rule-wrap">${this.hRuler()}</div>
        </div>
        <div class="stage">
          <div class="side-rule">${this.vRuler()}</div>
          <div class="view"><article class="sheet">
            <table class="headtab">
              <colgroup><col width="88"/><col width="133"/><col/></colgroup>
              <tbody><tr><td class="logo" rowspan="2">[Logomarca]</td><td class="l" rowspan="2">Contrato nº: [Número do<br/>Contrato]</td><td height="47">[Endereço_Cidade]/[Endereço_Estado] - CEP : [Endereço_CEP]</td></tr>
              <tr><td height="13">Fones: [Telefone]</td></tr></tbody>
            </table>
            <table class="resume">
              <tbody>
                <tr class="h17"><th colspan="3">QUADRO DE RESUMO</th></tr>
                <tr class="h14"><td colspan="3">Nome:</td></tr>
                <tr class="h16"><td colspan="3">Endereço: [Endereço_Residencial_Logradouro_Complemento]</td></tr>
                <tr class="h16"><td>[Endereço_Residencial_Bairro]</td><td>Cidade: [Endereço_Residencial_Cidade]</td><td>CEP: [Endereço_Residencial_CEP]</td></tr>
                <tr class="h14"><td>Telefone:[Telefone Residencial]</td><td>Comercial: [Telefone Comercial]</td><td>Celular: [Telefone Celular]</td></tr>
                <tr class="h14"><td>[CPF_Ou_CNPJ_do_Cliente]</td><td>[RG_Ou_Inscrição_Estadual]</td><td>UF: [Endereço_Residencial_Estado]</td></tr>
                <tr class="tall"><td>Data de Nascimento:<br/>[Data_nascimento_do_cliente]</td><td>Email: [Email_Cliente]</td><td></td></tr>
                <tr class="h13"><td colspan="3"></td></tr>
                <tr class="h14"><td colspan="3">Endereço de Entrega: [Endereço_de_Entrega_Logradouro_Complemento]</td></tr>
                <tr class="tall"><td>Bairro: [Endereço_de_Entrega_Bairro]</td><td>Cidade:<br/>[Endereço_de_Entrega_Cidade]</td><td>CEP: [Endereço_de_Entrega_CEP]</td></tr>
                <tr class="h15"><td colspan="3">Ponto de Referência:</td></tr>
                <tr class="h15"><td colspan="3"></td></tr>
                <tr class="h14"><td colspan="2">Responsável pelo Projeto:[Responsavel_Projeto]</td><td>Tipo Contrato: [Tipo_do_Contrato]</td></tr>
              </tbody>
            </table>
            <table class="next"><tbody><tr><td></td></tr></tbody></table>
          </article></div>
          <div class="vscroll"><svg width="7" height="4"><path d="M0 4h7L3.500 0z" fill="#2f5f9e"/></svg><div class="thumb"><svg width="9" height="8"><path d="M0 .5h9M0 3.500h9M0 6.500h9" stroke="#3f6aa8"/></svg></div><svg width="7" height="4"><path d="M0 0h7L3.500 4z" fill="#2f5f9e"/></svg></div>
        </div>
        <div class="status">
          <button class="v sel" aria-label="Layout de impressão"><svg width="12" height="12" viewBox="0 0 12 12"><path d="M.5.5h11v11H.5z" fill="#fff" stroke="#555"/><path d="M2 2.500h8M2 4.500h8M2 6.500h8M2 8.500h8" stroke="#444"/></svg></button>
          <button class="v web" aria-label="Layout da web"><svg width="13" height="13" viewBox="0 0 13 13"><path d="M1.500.5h8v10h-8z" fill="#fff" stroke="#667"/><path d="M2 2.500h7M2 4.500h7M2 6.500h4" stroke="#556"/><circle cx="9.500" cy="9.500" r="3" fill="#3b82b5" stroke="#25577a" stroke-width=".7"/><path d="M8 9l2-1 .5 2-1 1z" fill="#5fc06a"/></svg></button>
          <select class="pct" aria-label="Zoom"><option>80%</option></select>
          <button aria-label="Diminuir zoom"><svg width="16" height="16" viewBox="0 0 16 16"><circle cx="8" cy="8" r="7.300" fill="#f4f4f4" stroke="#777"/><path d="M4 8h8" stroke="#666" stroke-width="1.700"/></svg></button>
          <input class="range" type="range" aria-label="Nível de zoom" .value=${String(this.zoom)} @input=${(e: Event) => (this.zoom = +(e.target as HTMLInputElement).value)}/>
          <button aria-label="Aumentar zoom"><svg width="16" height="16" viewBox="0 0 16 16"><circle cx="8" cy="8" r="7.300" fill="#f4f4f4" stroke="#777"/><path d="M4 8h8M8 4v8" stroke="#666" stroke-width="1.700"/></svg></button>
        </div>
        <svg class="mark m2" width="80" height="40" viewBox="0 0 80 40"><path d="M76 16q5 4 0 7l-43-1q-3 4 2 11 1 6-5 4-8-6-16-11Q7 23 1 21q-2-2 1-3 7-2 11-4 7-4 16-12 5-3 5 2-3 6-5 10z" fill="#f00"/></svg>
      </section>`;
  }

  render() {
    const doc = (cls: string, icon: unknown, label: string, active = false) => html`
      <button class=${classMap({ doc: true, [cls]: true, active })} aria-label=${label}>${icon}${cls === "d1" ? "" : label}
      ${active ? html`<span class="close">x</span>` : ""}</button>`;
    const gridIcon = html`<svg width="18" height="14" viewBox="0 0 18 14"><path d="M.5.5h7v5h-7zM10.500.5h7v5h-7zM.5 8.500h7v5h-7zM10.500 8.500h7v5h-7z" fill="#e3e8f3" stroke="#6e7685"/></svg>`;
    const book = html`<svg width="17" height="17" viewBox="0 0 17 17"><path d="M3 1h10v13H3z" fill="#dcecfb" stroke="#2b62a0"/><path d="M1 3h4M1 6h4M1 9h4M1 12h4M6 4h5M6 7h5" stroke="#2b62a0"/><path d="M7 9h7l-1 4H8zM7 9L6 8" fill="#ddd" stroke="#555"/><circle cx="9" cy="15" r="1" fill="#333"/><circle cx="13" cy="15" r="1" fill="#333"/><path d="M13 6h3v2h-3z" fill="#e0701c"/></svg>`;
    return html`
      ${this.browser()}
      <main class="app">
        ${this.mainRibbon()}
        <nav class="docs narrow">
          ${doc("d1", gridIcon, "Painel")}${doc("d2", house(16), "Home")}${doc("d3", book, "Comercial")}${doc("d4", docCheck, "Contratos")}${doc("d5", docCheck, "Editor de Contratos", true)}
          <span class="space"></span><button class="tablist" aria-label="Lista de guias"><svg width="8" height="7" viewBox="0 0 8 7"><path d="M0 .5h8M0 2.500h8L4 6.500z" stroke="#223a5e" fill="#223a5e" stroke-width=".8"/></svg></button>
        </nav>
        <div class="content">
          ${this.form()}
          <div class="editor">
            <h2>Editor de Documentos Customizáveis</h2>
            ${this.editorRibbon()}
            <div class="work">${this.side()}${this.paper()}</div>
          </div>
        </div>
      </main>`;
  }
}
